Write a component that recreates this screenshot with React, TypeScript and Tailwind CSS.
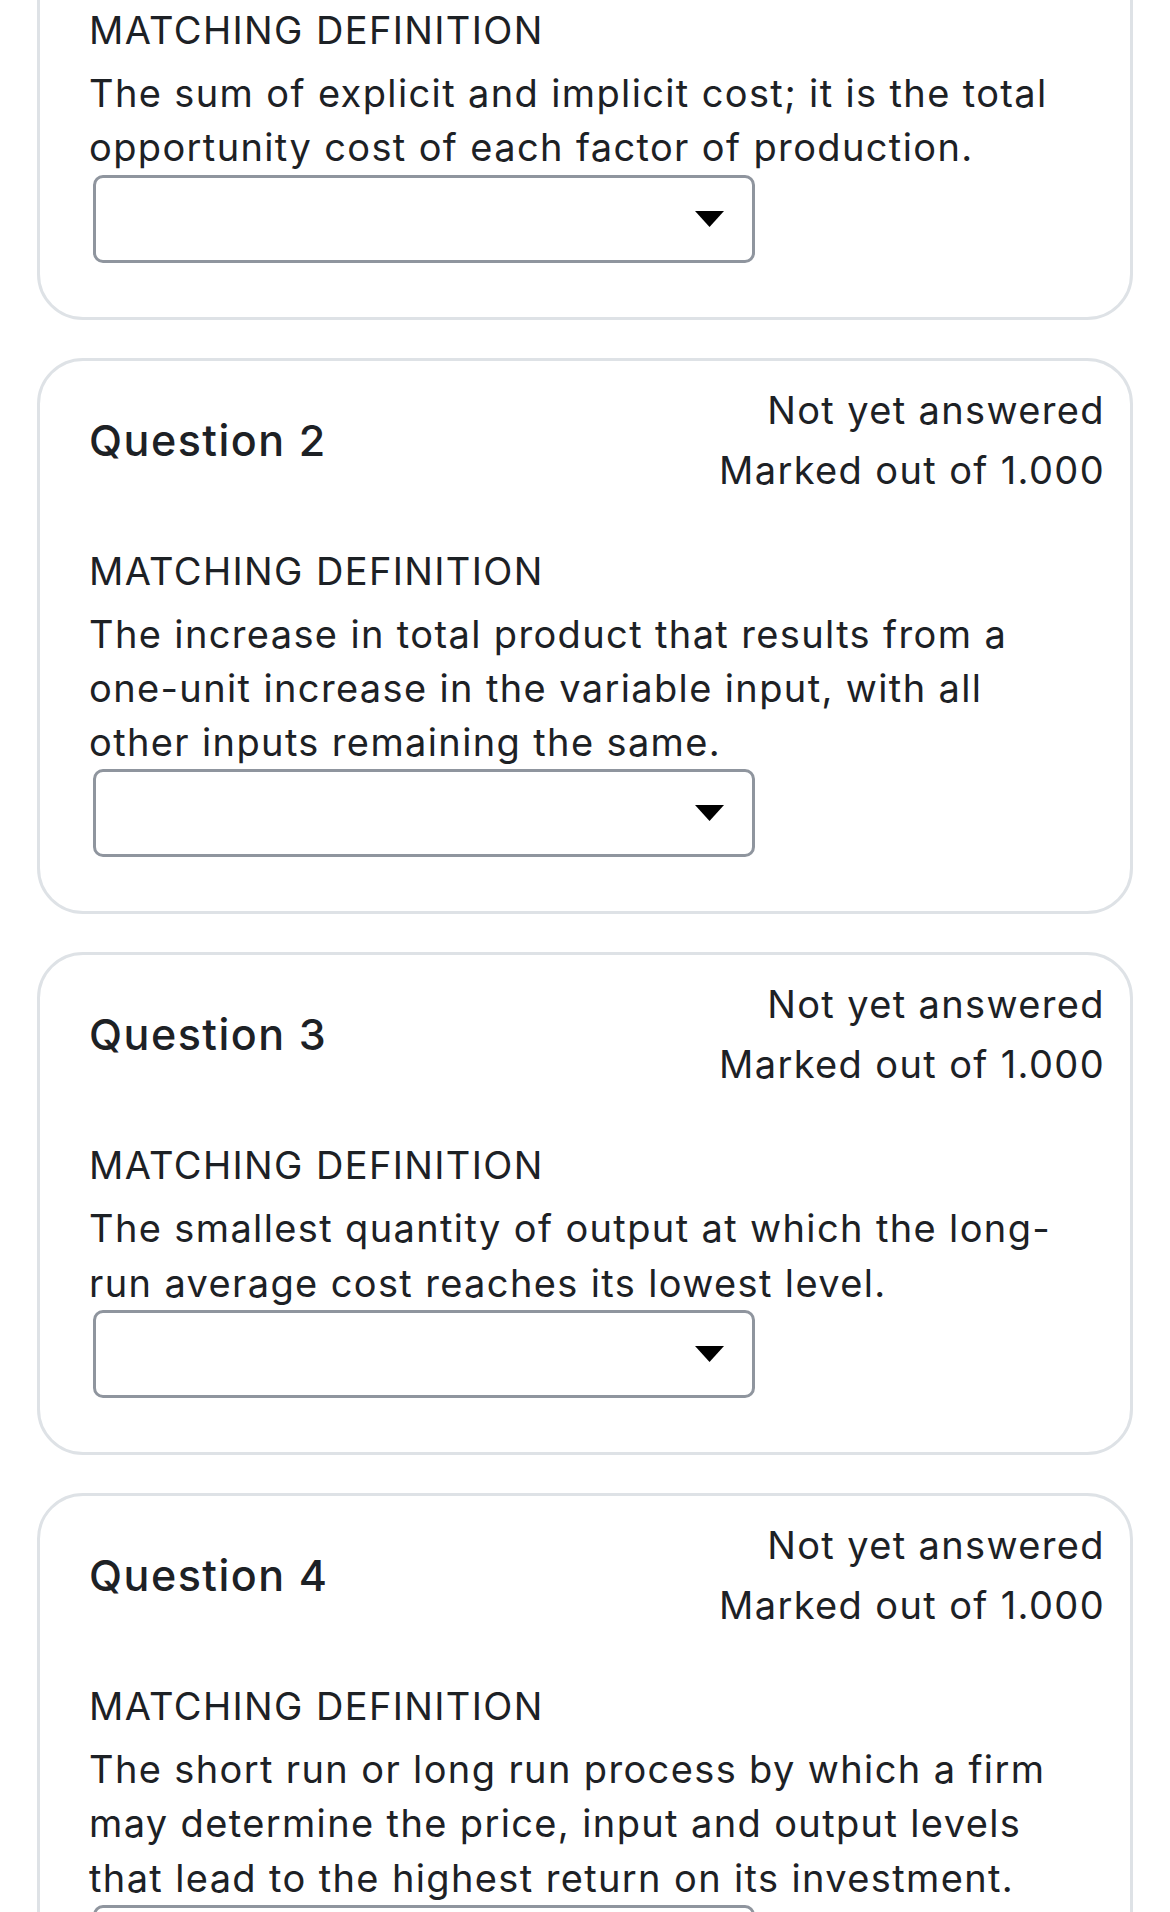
const questions = [
  {
    no: 1,
    text: "The sum of explicit and implicit cost; it is the total opportunity cost of each factor of production.",
  },
  {
    no: 2,
    text: "The increase in total product that results from a one-unit increase in the variable input, with all other inputs remaining the same.",
  },
  {
    no: 3,
    text: "The smallest quantity of output at which the long-run average cost reaches its lowest level.",
  },
  {
    no: 4,
    text: "The short run or long run process by which a firm may determine the price, input and output levels that lead to the highest return on its investment.",
  },
];

function SelectBox() {
  return (
    <div className="ml-[4px] flex h-[88px] w-[662px] items-center justify-end rounded-[10px] border-[3px] border-[#8f959e] bg-white pr-[28px]">
      <svg width="29" height="16" viewBox="0 0 29 16">
        <path d="M0 0 H29 L14.5 16 Z" fill="#000" />
      </svg>
    </div>
  );
}

function QuestionCard({ no, text }: { no: number; text: string }) {
  return (
    <div className="rounded-[46px] border-[3px] border-[#dee2e6] bg-white pb-[54px] pl-[49px] pr-[25px] pt-[19px] text-[#1d2125]">
      <div className="flex items-center justify-between">
        <h3 className="text-[43px] font-medium leading-[60px] tracking-[0.035em]">Question {no}</h3>
        <div className="text-right text-[38px] leading-[60px] tracking-[0.036em]">
          <div>Not yet answered</div>
          <div>Marked out of 1.000</div>
        </div>
      </div>
      <div className="mt-[44px] text-[38px] leading-[54px] tracking-[0.036em]">MATCHING DEFINITION</div>
      <p className="mt-[9px] pr-[30px] text-[38px] leading-[54.3px] tracking-[0.036em]">{text}</p>
      <SelectBox />
    </div>
  );
}

export default function App() {
  return (
    <div
      className="min-h-[1912px] overflow-hidden bg-white px-[37px]"
      style={{ fontFamily: "Inter, 'Noto Sans', sans-serif" }}
    >
      <div className="-mt-[183px] flex flex-col gap-[38px]">
        {questions.map((q) => (
          <QuestionCard key={q.no} no={q.no} text={q.text} />
        ))}
      </div>
    </div>
  );
}
